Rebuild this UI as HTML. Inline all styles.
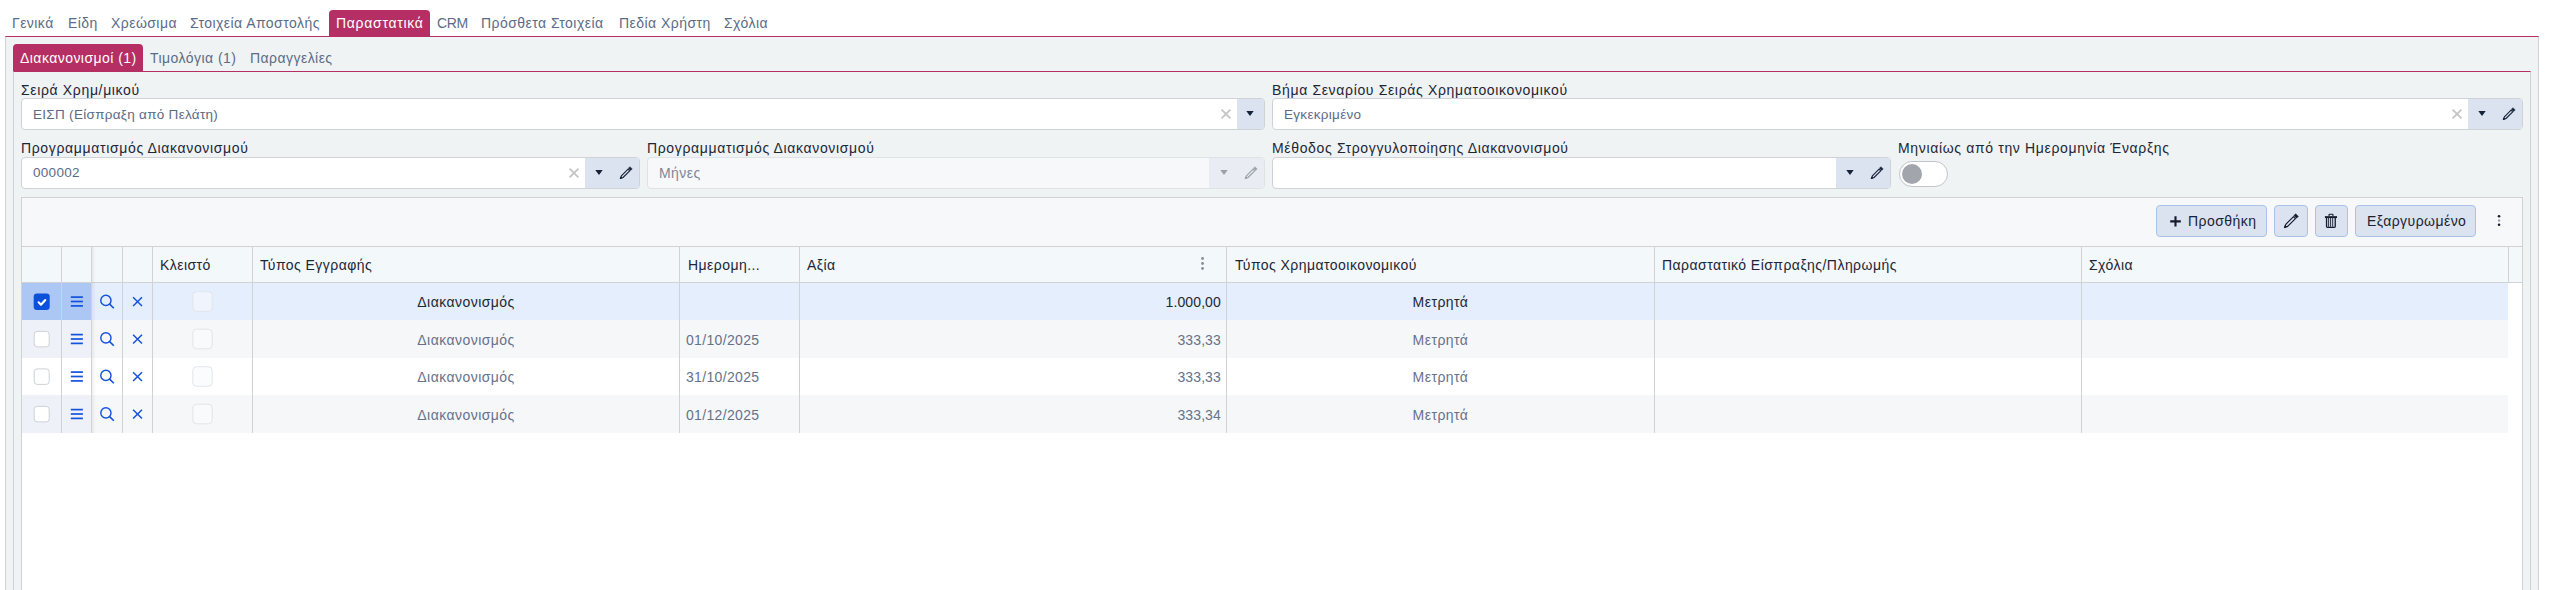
<!DOCTYPE html>
<html><head><meta charset="utf-8">
<style>
*{box-sizing:border-box;margin:0;padding:0}
html,body{width:2551px;height:590px;overflow:hidden;background:#fff;font-family:"Liberation Sans",sans-serif;font-size:14px;letter-spacing:0.45px}
.a{position:absolute}
.t{position:absolute;white-space:nowrap;line-height:16px}
.toptab{color:#5b6c87}
.pink{background:#b52f64}
.lbl{color:#1d2636;letter-spacing:0.65px}
.inp{position:absolute;height:32px;background:#fff;border:1px solid #cfd3d7;border-radius:4px;overflow:hidden}
.inp.dis{background:#f7f8fa;border-color:#dfe3e8}
.btns{position:absolute;top:0;bottom:0;right:0;background:#dae3ef}
.dis .btns{background:#e9edf3}
.ival{position:absolute;left:11px;top:8px;color:#5b6b86;white-space:nowrap;line-height:16px;font-size:13.5px;letter-spacing:0.3px}
.tb{position:absolute;background:#dae3ef;border:1px solid #a9c3e6;border-radius:4px}
.vl{position:absolute;width:1px;background:#d1d2d3}
svg{position:absolute;overflow:visible}
</style></head><body>

<div class="a pink" style="left:329px;top:10px;width:101px;height:27px;border-radius:4px 4px 0 0"></div>
<div class="t toptab" style="left:12px;top:15px">Γενικά</div>
<div class="t toptab" style="left:68px;top:15px">Είδη</div>
<div class="t toptab" style="left:111px;top:15px">Χρεώσιμα</div>
<div class="t toptab" style="left:190px;top:15px">Στοιχεία Αποστολής</div>
<div class="t toptab" style="left:437px;top:15px;letter-spacing:-0.4px">CRM</div>
<div class="t toptab" style="left:481px;top:15px">Πρόσθετα Στοιχεία</div>
<div class="t toptab" style="left:619px;top:15px">Πεδία Χρήστη</div>
<div class="t toptab" style="left:724px;top:15px">Σχόλια</div>
<div class="t" style="left:336px;top:15px;color:#fff;letter-spacing:0.7px">Παραστατικά</div>
<div class="a" style="left:5px;top:36px;width:2534px;height:560px;background:#f0f3f4;border-left:1px solid #d0d1d2;border-right:1px solid #d0d1d2;border-top:1px solid #b52f64"></div>
<div class="a pink" style="left:13px;top:44px;width:130px;height:28px;border-radius:4px 4px 0 0"></div>
<div class="t" style="left:20px;top:50px;color:#fff">Διακανονισμοί (1)</div>
<div class="t toptab" style="left:150px;top:50px">Τιμολόγια (1)</div>
<div class="t toptab" style="left:250px;top:50px">Παραγγελίες</div>
<div class="a" style="left:13px;top:71px;width:2518px;height:530px;border-left:1px solid #d0d1d2;border-right:1px solid #d0d1d2;border-top:1px solid #b52f64"></div>
<div class="t lbl" style="left:21px;top:82px">Σειρά Χρημ/μικού</div>
<div class="inp" style="left:21px;top:98px;width:1244px"><div class="ival" style="top:8px">ΕΙΣΠ (Είσπραξη από Πελάτη)</div><svg style="left:1199px;top:10px" width="10" height="10" viewBox="0 0 10 10"><path d="M0.6 0.6L9.4 9.4M9.4 0.6L0.6 9.4" stroke="#c4c4c4" stroke-width="1.8"/></svg><div class="btns" style="width:27px"><svg style="left:9px;top:12px" width="8" height="6" viewBox="0 0 8 6"><path d="M0.3 0H7.7L4 5.1Z" fill="#16213a"/></svg></div></div>
<div class="t lbl" style="left:1272px;top:82px">Βήμα Σεναρίου Σειράς Χρηματοοικονομικού</div>
<div class="inp" style="left:1272px;top:98px;width:1251px"><div class="ival" style="top:8px">Εγκεκριμένο</div><svg style="left:1179px;top:10px" width="10" height="10" viewBox="0 0 10 10"><path d="M0.6 0.6L9.4 9.4M9.4 0.6L0.6 9.4" stroke="#c4c4c4" stroke-width="1.8"/></svg><div class="btns" style="width:54px"><svg style="left:10px;top:12px" width="8" height="6" viewBox="0 0 8 6"><path d="M0.3 0H7.7L4 5.1Z" fill="#16213a"/></svg><svg style="left:33.8px;top:8.3px" width="13.8" height="13.8" viewBox="0 0 16 16"><path d="M13.52 5.26L10.84 2.58L12.68 0.74L15.36 3.42Z" fill="#16213a" stroke="#16213a" stroke-width="0.5" stroke-linejoin="round"/><path d="M12.43 5.59L10.52 3.68L2.75 11.45L1.57 14.53L4.66 13.36Z" fill="none" stroke="#16213a" stroke-width="1.3" stroke-linejoin="round"/><path d="M1.57 14.53L2.35 12.47L3.63 13.75Z" fill="#16213a" stroke="#16213a" stroke-width="0.9" stroke-linejoin="round"/></svg></div></div>
<div class="t lbl" style="left:21px;top:140px">Προγραμματισμός Διακανονισμού</div>
<div class="inp" style="left:21px;top:157px;width:619px"><div class="ival" style="top:7px">000002</div><svg style="left:547px;top:10px" width="10" height="10" viewBox="0 0 10 10"><path d="M0.6 0.6L9.4 9.4M9.4 0.6L0.6 9.4" stroke="#c4c4c4" stroke-width="1.8"/></svg><div class="btns" style="width:54px"><svg style="left:10px;top:12px" width="8" height="6" viewBox="0 0 8 6"><path d="M0.3 0H7.7L4 5.1Z" fill="#16213a"/></svg><svg style="left:33.8px;top:8.3px" width="13.8" height="13.8" viewBox="0 0 16 16"><path d="M13.52 5.26L10.84 2.58L12.68 0.74L15.36 3.42Z" fill="#16213a" stroke="#16213a" stroke-width="0.5" stroke-linejoin="round"/><path d="M12.43 5.59L10.52 3.68L2.75 11.45L1.57 14.53L4.66 13.36Z" fill="none" stroke="#16213a" stroke-width="1.3" stroke-linejoin="round"/><path d="M1.57 14.53L2.35 12.47L3.63 13.75Z" fill="#16213a" stroke="#16213a" stroke-width="0.9" stroke-linejoin="round"/></svg></div></div>
<div class="t lbl" style="left:647px;top:140px">Προγραμματισμός Διακανονισμού</div>
<div class="inp dis" style="left:647px;top:157px;width:618px"><div class="ival" style="top:7px;color:#7d8796;font-size:14px;letter-spacing:0.45px">Μήνες</div><div class="btns" style="width:55px"><svg style="left:11px;top:12px" width="8" height="6" viewBox="0 0 8 6"><path d="M0.3 0H7.7L4 5.1Z" fill="#9aa0a8"/></svg><svg style="left:34.6px;top:8.3px" width="13.8" height="13.8" viewBox="0 0 16 16"><path d="M13.52 5.26L10.84 2.58L12.68 0.74L15.36 3.42Z" fill="#9aa0a8" stroke="#9aa0a8" stroke-width="0.5" stroke-linejoin="round"/><path d="M12.43 5.59L10.52 3.68L2.75 11.45L1.57 14.53L4.66 13.36Z" fill="none" stroke="#9aa0a8" stroke-width="1.3" stroke-linejoin="round"/><path d="M1.57 14.53L2.35 12.47L3.63 13.75Z" fill="#9aa0a8" stroke="#9aa0a8" stroke-width="0.9" stroke-linejoin="round"/></svg></div></div>
<div class="t lbl" style="left:1272px;top:140px">Μέθοδος Στρογγυλοποίησης Διακανονισμού</div>
<div class="inp" style="left:1272px;top:157px;width:619px"><div class="btns" style="width:54px"><svg style="left:10px;top:12px" width="8" height="6" viewBox="0 0 8 6"><path d="M0.3 0H7.7L4 5.1Z" fill="#16213a"/></svg><svg style="left:33.8px;top:8.3px" width="13.8" height="13.8" viewBox="0 0 16 16"><path d="M13.52 5.26L10.84 2.58L12.68 0.74L15.36 3.42Z" fill="#16213a" stroke="#16213a" stroke-width="0.5" stroke-linejoin="round"/><path d="M12.43 5.59L10.52 3.68L2.75 11.45L1.57 14.53L4.66 13.36Z" fill="none" stroke="#16213a" stroke-width="1.3" stroke-linejoin="round"/><path d="M1.57 14.53L2.35 12.47L3.63 13.75Z" fill="#16213a" stroke="#16213a" stroke-width="0.9" stroke-linejoin="round"/></svg></div></div>
<div class="t lbl" style="left:1898px;top:140px">Μηνιαίως από την Ημερομηνία Έναρξης</div>
<div class="a" style="left:1899px;top:161px;width:49px;height:26px;border:1.5px solid #c2c5ca;border-radius:13px;background:#fff"></div>
<div class="a" style="left:1902px;top:164px;width:20px;height:20px;border-radius:10px;background:#a2a5ab"></div>
<div class="a" style="left:21px;top:197px;width:2502px;height:400px;border:1px solid #d1d2d3;background:#fff"></div>
<div class="a" style="left:22px;top:198px;width:2500px;height:48px;background:#f7f8fa"></div>
<div class="a" style="left:22px;top:246px;width:2500px;height:37px;background:#f3f8fb;border-top:1px solid #d1d2d3;border-bottom:1px solid #d1d2d3"></div>
<div class="a" style="left:22px;top:283px;width:70px;height:37px;background:#adc7f4"></div>
<div class="a" style="left:92px;top:283px;width:2416px;height:37px;background:#e5eefc"></div>
<div class="a" style="left:22px;top:320px;width:70px;height:38px;background:#eef2f8"></div>
<div class="a" style="left:92px;top:320px;width:2416px;height:38px;background:#f6f7f9"></div>
<div class="a" style="left:22px;top:358px;width:70px;height:37px;background:#ffffff"></div>
<div class="a" style="left:92px;top:358px;width:2416px;height:37px;background:#ffffff"></div>
<div class="a" style="left:22px;top:395px;width:70px;height:38px;background:#eef2f8"></div>
<div class="a" style="left:92px;top:395px;width:2416px;height:38px;background:#f6f7f9"></div>
<div class="a" style="left:92px;top:247px;width:4px;height:186px;background:linear-gradient(to right,rgba(0,0,0,0.06),rgba(0,0,0,0))"></div>
<div class="vl" style="left:61px;top:247px;height:186px"></div>
<div class="vl" style="left:91px;top:247px;height:186px"></div>
<div class="vl" style="left:122px;top:247px;height:186px"></div>
<div class="vl" style="left:152px;top:247px;height:186px"></div>
<div class="vl" style="left:252px;top:247px;height:186px"></div>
<div class="vl" style="left:679px;top:247px;height:186px"></div>
<div class="vl" style="left:799px;top:247px;height:186px"></div>
<div class="vl" style="left:1226px;top:247px;height:186px"></div>
<div class="vl" style="left:1654px;top:247px;height:186px"></div>
<div class="vl" style="left:2081px;top:247px;height:186px"></div>
<div class="vl" style="left:2508px;top:247px;height:35px"></div>
<div class="tb" style="left:2156px;top:205px;width:111px;height:32px"></div>
<svg style="left:2170px;top:216px" width="11" height="11" viewBox="0 0 11 11"><path d="M5.5 0.2V10.5M0.2 5.35H10.8" stroke="#141c2e" stroke-width="2.1"/></svg>
<div class="t" style="left:2188px;top:213px;color:#1a2335">Προσθήκη</div>
<div class="tb" style="left:2274px;top:205px;width:34px;height:32px"></div>
<svg style="left:2283px;top:213px" width="16" height="16" viewBox="0 0 16 16"><path d="M13.52 5.26L10.84 2.58L12.68 0.74L15.36 3.42Z" fill="#141c2e" stroke="#141c2e" stroke-width="0.5" stroke-linejoin="round"/><path d="M12.43 5.59L10.52 3.68L2.75 11.45L1.57 14.53L4.66 13.36Z" fill="none" stroke="#141c2e" stroke-width="1.2" stroke-linejoin="round"/><path d="M1.57 14.53L2.35 12.47L3.63 13.75Z" fill="#141c2e" stroke="#141c2e" stroke-width="0.9" stroke-linejoin="round"/></svg>
<div class="tb" style="left:2315px;top:205px;width:33px;height:32px"></div>
<svg style="left:2324px;top:213px" width="14" height="16" viewBox="0 0 14 16"><path d="M5.05 3V1.65Q5.05 1.25 5.45 1.25H8.55Q8.95 1.25 8.95 1.65V3" fill="none" stroke="#141c2e" stroke-width="1.1"/><path d="M0.9 4.1H13" stroke="#141c2e" stroke-width="1.9"/><path d="M2.55 4.8V13.6Q2.55 14.4 3.35 14.4H10.45Q11.25 14.4 11.25 13.6V4.8" fill="none" stroke="#141c2e" stroke-width="1.3"/><path d="M4.6 5V13.8M6.6 5V13.8M8.7 5V13.8" stroke="#141c2e" stroke-width="0.9"/></svg>
<div class="tb" style="left:2355px;top:205px;width:121px;height:32px"></div>
<div class="t" style="left:2367px;top:213px;color:#1a2335">Εξαργυρωμένο</div>
<svg style="left:2496px;top:213px" width="6" height="15" viewBox="0 0 6 15"><circle cx="3.05" cy="3.2" r="1.3" fill="#141c2e"/><circle cx="3.05" cy="7.5" r="1.2" fill="#9aa0a8"/><circle cx="3.05" cy="11.8" r="1.3" fill="#141c2e"/></svg>
<div class="t" style="left:160px;top:257px;color:#1d2636">Κλειστό</div>
<div class="t" style="left:260px;top:257px;color:#1d2636">Τύπος Εγγραφής</div>
<div class="t" style="left:688px;top:257px;color:#1d2636">Ημερομη...</div>
<div class="t" style="left:807px;top:257px;color:#1d2636">Αξία</div>
<div class="t" style="left:1235px;top:257px;color:#1d2636">Τύπος Χρηματοοικονομικού</div>
<div class="t" style="left:1662px;top:257px;color:#1d2636">Παραστατικό Είσπραξης/Πληρωμής</div>
<div class="t" style="left:2089px;top:257px;color:#1d2636">Σχόλια</div>
<svg style="left:1199px;top:256px" width="6" height="15" viewBox="0 0 6 15"><circle cx="3.55" cy="2.5" r="1.45" fill="#8b9096"/><circle cx="3.55" cy="7.5" r="1.45" fill="#8b9096"/><circle cx="3.55" cy="12.5" r="1.45" fill="#8b9096"/></svg>
<div class="t" style="left:253px;width:426px;text-align:center;top:294px;color:#212836">Διακανονισμός</div>
<div class="t" style="left:800px;width:420.9px;text-align:right;top:294px;color:#212836;letter-spacing:0.1px">1.000,00</div>
<div class="t" style="left:1227px;width:427px;text-align:center;top:294px;color:#212836">Μετρητά</div>
<div class="t" style="left:253px;width:426px;text-align:center;top:332px;color:#66728a">Διακανονισμός</div>
<div class="t" style="left:686px;top:332px;color:#66728a;letter-spacing:0.33px">01/10/2025</div>
<div class="t" style="left:800px;width:420.9px;text-align:right;top:332px;color:#66728a;letter-spacing:0.1px">333,33</div>
<div class="t" style="left:1227px;width:427px;text-align:center;top:332px;color:#66728a">Μετρητά</div>
<div class="t" style="left:253px;width:426px;text-align:center;top:369px;color:#66728a">Διακανονισμός</div>
<div class="t" style="left:686px;top:369px;color:#66728a;letter-spacing:0.33px">31/10/2025</div>
<div class="t" style="left:800px;width:420.9px;text-align:right;top:369px;color:#66728a;letter-spacing:0.1px">333,33</div>
<div class="t" style="left:1227px;width:427px;text-align:center;top:369px;color:#66728a">Μετρητά</div>
<div class="t" style="left:253px;width:426px;text-align:center;top:407px;color:#66728a">Διακανονισμός</div>
<div class="t" style="left:686px;top:407px;color:#66728a;letter-spacing:0.33px">01/12/2025</div>
<div class="t" style="left:800px;width:420.9px;text-align:right;top:407px;color:#66728a;letter-spacing:0.1px">333,34</div>
<div class="t" style="left:1227px;width:427px;text-align:center;top:407px;color:#66728a">Μετρητά</div>
<svg style="left:0;top:0" width="2551" height="590" viewBox="0 0 2551 590">
<rect x="33.7" y="293.4" width="16" height="16.5" rx="3.2" fill="#0b50dd"/>
<path d="M38.6 302.3L41 304.7L45.3 300.0" fill="none" stroke="#fff" stroke-width="2.1" stroke-linecap="round" stroke-linejoin="round"/>
<path d="M70.8 297.1H82.9" stroke="#1452dc" stroke-width="1.7"/>
<path d="M70.8 301.5H82.9" stroke="#1452dc" stroke-width="1.7"/>
<path d="M70.8 305.9H82.9" stroke="#1452dc" stroke-width="1.7"/>
<circle cx="105.9" cy="300.4" r="5.1" fill="none" stroke="#1452dc" stroke-width="1.45"/>
<path d="M109.4 303.9L113.8 308.3" stroke="#1452dc" stroke-width="1.6"/>
<path d="M133.1 297.2L142 306.0M142 297.2L133.1 306.0" stroke="#1452dc" stroke-width="1.5"/>
<rect x="192.8" y="291.7" width="19.4" height="19.6" rx="3.8" fill="#f0f5fd" stroke="#e2e5ea" stroke-width="1"/>
<rect x="34.2" y="331.4" width="15" height="15.5" rx="3" fill="#fff" stroke="#cdd1d6" stroke-width="1"/>
<path d="M70.8 334.6H82.9" stroke="#1452dc" stroke-width="1.7"/>
<path d="M70.8 339.0H82.9" stroke="#1452dc" stroke-width="1.7"/>
<path d="M70.8 343.4H82.9" stroke="#1452dc" stroke-width="1.7"/>
<circle cx="105.9" cy="337.9" r="5.1" fill="none" stroke="#1452dc" stroke-width="1.45"/>
<path d="M109.4 341.4L113.8 345.8" stroke="#1452dc" stroke-width="1.6"/>
<path d="M133.1 334.7L142 343.5M142 334.7L133.1 343.5" stroke="#1452dc" stroke-width="1.5"/>
<rect x="192.8" y="329.2" width="19.4" height="19.6" rx="3.8" fill="#f9fafb" stroke="#e2e5ea" stroke-width="1"/>
<rect x="34.2" y="368.9" width="15" height="15.5" rx="3" fill="#fff" stroke="#cdd1d6" stroke-width="1"/>
<path d="M70.8 372.1H82.9" stroke="#1452dc" stroke-width="1.7"/>
<path d="M70.8 376.5H82.9" stroke="#1452dc" stroke-width="1.7"/>
<path d="M70.8 380.9H82.9" stroke="#1452dc" stroke-width="1.7"/>
<circle cx="105.9" cy="375.4" r="5.1" fill="none" stroke="#1452dc" stroke-width="1.45"/>
<path d="M109.4 378.9L113.8 383.3" stroke="#1452dc" stroke-width="1.6"/>
<path d="M133.1 372.2L142 381.0M142 372.2L133.1 381.0" stroke="#1452dc" stroke-width="1.5"/>
<rect x="192.8" y="366.7" width="19.4" height="19.6" rx="3.8" fill="#fbfcfd" stroke="#e2e5ea" stroke-width="1"/>
<rect x="34.2" y="406.4" width="15" height="15.5" rx="3" fill="#fff" stroke="#cdd1d6" stroke-width="1"/>
<path d="M70.8 409.6H82.9" stroke="#1452dc" stroke-width="1.7"/>
<path d="M70.8 414.0H82.9" stroke="#1452dc" stroke-width="1.7"/>
<path d="M70.8 418.4H82.9" stroke="#1452dc" stroke-width="1.7"/>
<circle cx="105.9" cy="412.9" r="5.1" fill="none" stroke="#1452dc" stroke-width="1.45"/>
<path d="M109.4 416.4L113.8 420.8" stroke="#1452dc" stroke-width="1.6"/>
<path d="M133.1 409.7L142 418.5M142 409.7L133.1 418.5" stroke="#1452dc" stroke-width="1.5"/>
<rect x="192.8" y="404.2" width="19.4" height="19.6" rx="3.8" fill="#f9fafb" stroke="#e2e5ea" stroke-width="1"/>
</svg>
</body></html>
